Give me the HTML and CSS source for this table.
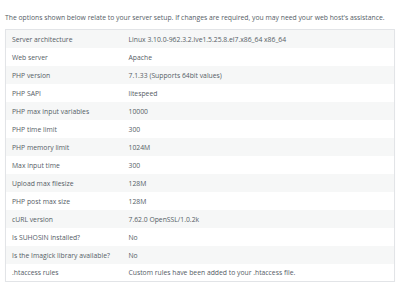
FILE: index.html
```html
<!DOCTYPE html>
<html>
<head>
  <title>Server Setup</title>
  <link rel="stylesheet" href="styles.css">
</head>
<body>

  <p class="intro">The options shown below relate to your server setup. If changes are required, you may need your web host's assistance.</p>

  <table class="server-info">
    <tr><td>Server architecture</td><td>Linux 3.10.0-962.3.2.lve1.5.25.8.el7.x86_64 x86_64</td></tr>
    <tr><td>Web server</td><td>Apache</td></tr>
    <tr><td>PHP version</td><td>7.1.33 (Supports 64bit values)</td></tr>
    <tr><td>PHP SAPI</td><td>litespeed</td></tr>
    <tr><td>PHP max input variables</td><td>10000</td></tr>
    <tr><td>PHP time limit</td><td>300</td></tr>
    <tr><td>PHP memory limit</td><td>1024M</td></tr>
    <tr><td>Max input time</td><td>300</td></tr>
    <tr><td>Upload max filesize</td><td>128M</td></tr>
    <tr><td>PHP post max size</td><td>128M</td></tr>
    <tr><td>cURL version</td><td>7.62.0 OpenSSL/1.0.2k</td></tr>
    <tr><td>Is SUHOSIN installed?</td><td>No</td></tr>
    <tr><td>Is the Imagick library available?</td><td>No</td></tr>
    <tr><td>.htaccess rules</td><td>Custom rules have been added to your .htaccess file.</td></tr>
  </table>

</body>
</html>
```

FILE: styles.css
```css
body {
  margin: 0;
  padding: 0 5px;
  font-family: "Open Sans", Arial, sans-serif;
  font-size: 6.8px;
  color: #555d66;
  background: #fff;
}

.intro {
  margin: 0;
  padding-top: 14px;
  height: 15px;
  line-height: 8px;
}

.server-info {
  width: 390px;
  border-collapse: collapse;
  border: 1px solid #e2e4e7;
  box-shadow: 0 1px 1px rgba(0, 0, 0, 0.04);
}

.server-info tr:nth-child(odd) {
  background: #f6f7f7;
}

.server-info td {
  height: 18px;
  padding: 1px 6px 0;
  box-sizing: border-box;
}

.server-info td:first-child {
  width: 117px;
}
```
